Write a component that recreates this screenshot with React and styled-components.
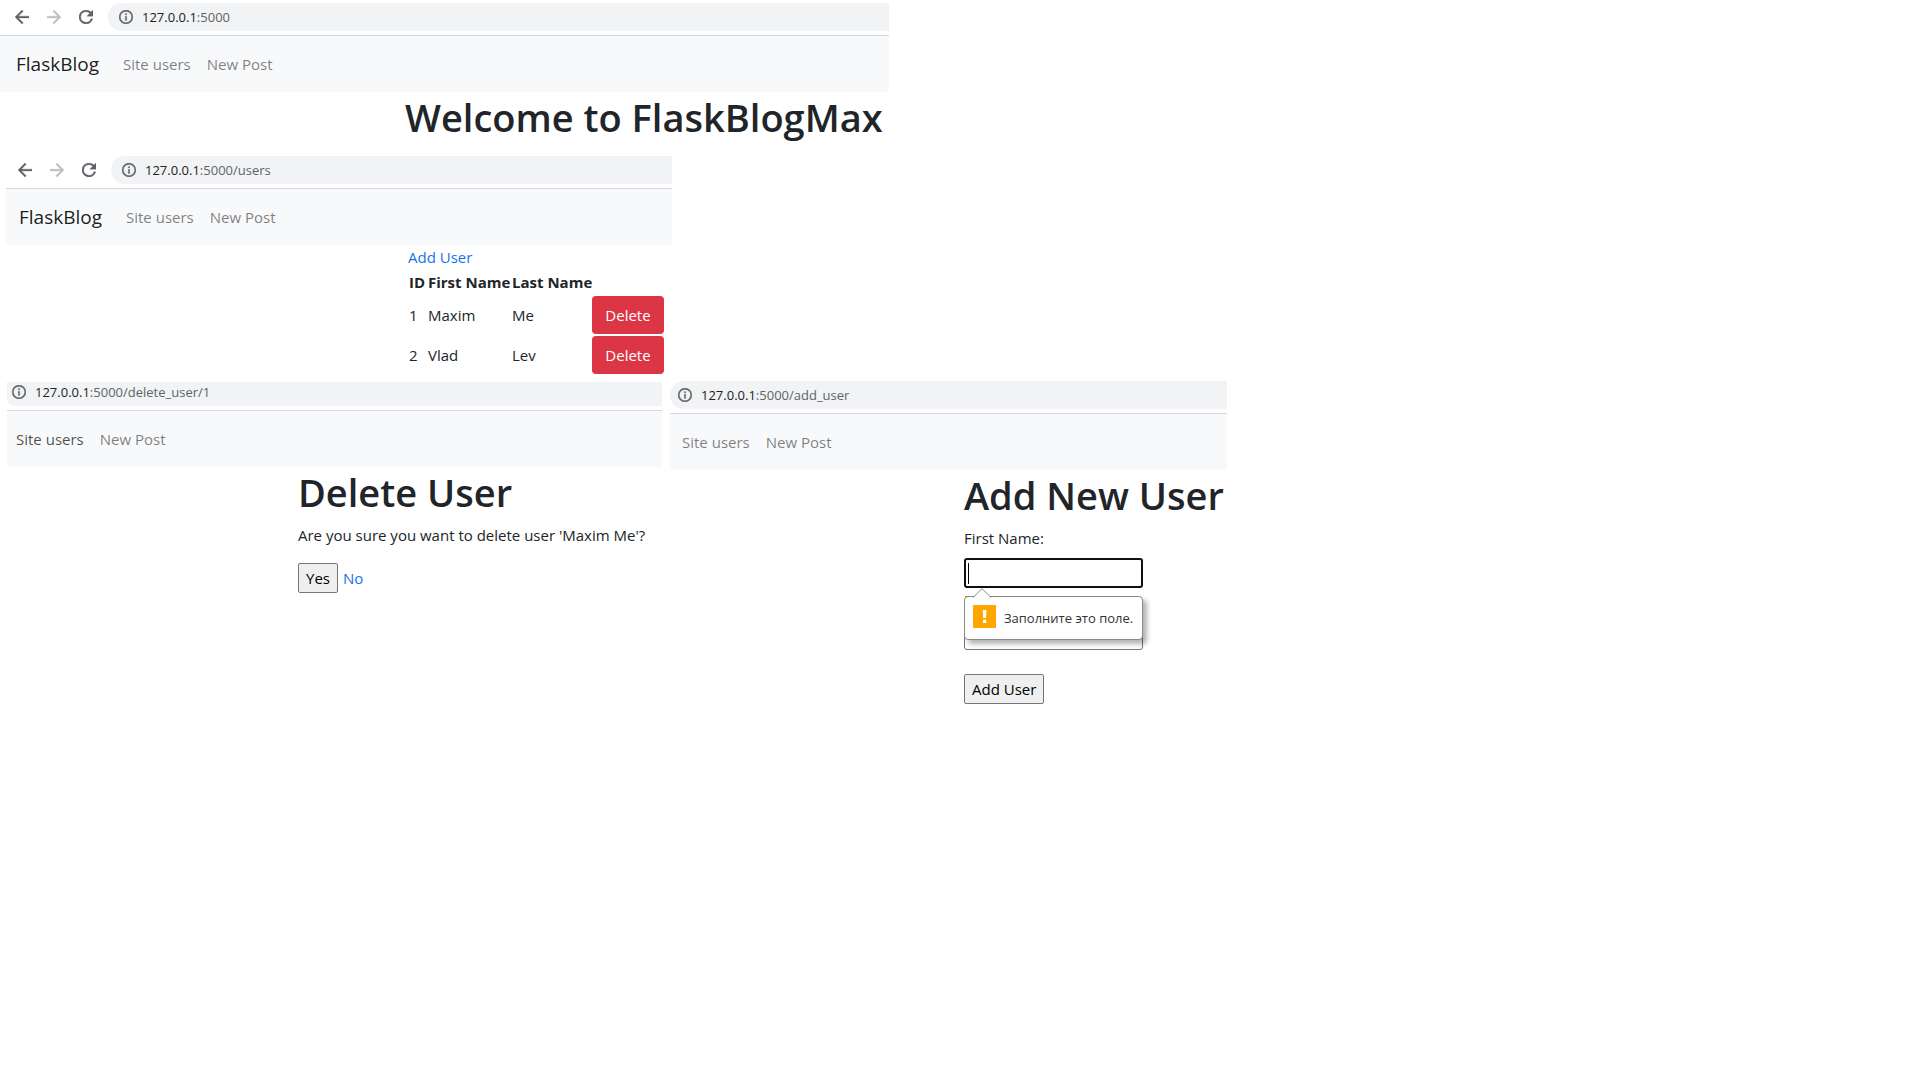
import React from "react";
import styled, { createGlobalStyle } from "styled-components";

const GlobalStyle = createGlobalStyle`
  *, *::before, *::after { box-sizing: border-box; }
  body {
    margin: 0;
    background: #fff;
    color: #212529;
    font-family: "Open Sans", "Noto Sans", sans-serif;
    font-size: 15px;
    line-height: 24px;
  }
`;

const Page = styled.main`
  display: flex;
  flex-direction: column;
  gap: 11px;
`;

const BottomRow = styled.div`
  display: flex;
  align-items: flex-start;
  gap: 8px;
  padding-left: 7px;
  margin-top: -8px;
`;

const Window = styled.section`
  width: 100%;
  max-width: ${(p) => p.$width}px;
  margin-left: ${(p) => p.$left || 0}px;
`;

const Toolbar = styled.div`
  display: flex;
  align-items: center;
  gap: 15px;
  padding: ${(p) => (p.$cut ? "4px 0 4px" : "3px 0 4px")};
  padding-left: ${(p) => p.$inset || 0}px;
  border-bottom: 1px solid #d5d8dc;
`;

const NavButtons = styled.div`
  display: flex;
  gap: 18px;
`;

const IconButton = styled.button`
  display: flex;
  padding: 0;
  border: 0;
  background: none;
  color: #5f6368;
  &:disabled { color: #bcbec1; }
`;

const AddressBar = styled.div`
  flex: 1;
  display: flex;
  align-items: center;
  gap: 9px;
  height: ${(p) => (p.$cut ? 24 : 28)}px;
  padding-left: ${(p) => p.$pad}px;
  padding-bottom: ${(p) => (p.$cut ? 4 : 0)}px;
  border-radius: ${(p) => (p.$cut ? "0 0 0 8px" : "14px 0 0 14px")};
  background: #f1f3f4;
  color: #5f6368;
  font-size: 13px;
  line-height: 20px;
`;

const Host = styled.span`
  color: #202124;
`;

const Navbar = styled.nav`
  display: flex;
  align-items: center;
  gap: 24px;
  height: 56px;
  padding-left: ${(p) => p.$pad}px;
  background: #f8f9fa;
`;

const Brand = styled.a`
  color: rgba(0, 0, 0, 0.9);
  font-size: 19px;
  line-height: 30px;
  text-decoration: none;
`;

const NavLinks = styled.div`
  display: flex;
  gap: 16px;
`;

const NavLink = styled.a`
  color: rgba(0, 0, 0, ${(p) => (p.$active ? 0.7 : 0.5)});
  text-decoration: none;
`;

const Content = styled.div`
  padding-left: ${(p) => p.$indent}px;
`;

const Title = styled.h1`
  margin: 0 0 6px;
  font-size: 38px;
  font-weight: 600;
  line-height: 50px;
  white-space: nowrap;
`;

const WelcomeTitle = styled(Title)`
  margin: 0;
`;

const Link = styled.a`
  color: #1a73e8;
  text-decoration: none;
`;

const Users = styled.table`
  border-collapse: collapse;
  table-layout: fixed;
  width: 257px;
  th, td {
    padding: 1px;
    text-align: left;
    white-space: nowrap;
  }
  th { font-weight: 700; }
`;

const Col = styled.col`
  width: ${(p) => p.$w}px;
`;

const DeleteButton = styled.button`
  display: block;
  width: 100%;
  height: 38px;
  padding: 0;
  border: 0;
  border-radius: 4px;
  background: #dc3545;
  color: #fff;
  font: inherit;
`;

const Paragraph = styled.p`
  margin: 0 0 16px;
`;

const Actions = styled.div`
  display: flex;
  align-items: center;
  gap: 5px;
`;

const PlainButton = styled.button`
  height: 30px;
  padding: 0 7px;
  border: 1px solid #767676;
  border-radius: 2px;
  background: #efefef;
  color: #000;
  font: inherit;
`;

const Form = styled.form`
  display: flex;
  flex-direction: column;
  align-items: flex-start;
`;

const Label = styled.label`
  margin-bottom: 8px;
`;

const Field = styled.div`
  position: relative;
  width: 179px;
`;

const TextInput = styled.input`
  display: block;
  width: 100%;
  height: 30px;
  padding: 1px 4px;
  border: 1px solid #767676;
  border-radius: 3px;
  background: #fff;
  font: inherit;
  outline: none;
  caret-color: transparent;
  &[aria-invalid="true"] { border: 2px solid #101010; }
`;

const Caret = styled.span`
  position: absolute;
  left: 4px;
  top: 5px;
  width: 1px;
  height: 21px;
  background: #000;
`;

const Bubble = styled.div`
  position: absolute;
  top: 38px;
  left: 0;
  z-index: 1;
  display: flex;
  align-items: flex-start;
  gap: 8px;
  width: 100%;
  height: 44px;
  padding: 8px 0 0 8px;
  border: 1px solid #8a8a8a;
  border-radius: 4px;
  background: #fff;
  box-shadow: 4px 4px 5px rgba(0, 0, 0, 0.3);
  color: #333;
  font-size: 13px;
  line-height: 26px;
  white-space: nowrap;
`;

const Pointer = styled.svg`
  position: absolute;
  left: 8px;
  top: -9px;
`;

const SubmitRow = styled.div`
  margin-top: 24px;
`;

const Glyph = ({ box = "4 4 16 16", d }) => (
  <svg width="14" height="14" viewBox={box} fill="currentColor" stroke="currentColor" strokeWidth="0.4" aria-hidden="true">
    <path d={d} />
  </svg>
);

const paths = {
  back: "M20 11H7.83l5.59-5.59L12 4l-8 8 8 8 1.41-1.41L7.83 13H20v-2z",
  forward: "M12 4l-1.41 1.41L16.17 11H4v2h12.17l-5.58 5.59L12 20l8-8z",
  reload:
    "M17.65 6.35A7.96 7.96 0 0 0 12 4a8 8 0 1 0 7.73 10h-2.08A6 6 0 1 1 12 6c1.66 0 3.14.69 4.22 1.78L13 11h7V4l-2.35 2.35z",
  info: "M11 7h2v2h-2zm0 4h2v6h-2zm1-9a10 10 0 1 0 0 20 10 10 0 0 0 0-20zm0 18a8 8 0 1 1 0-16 8 8 0 0 1 0 16z",
};

function BrowserBar({ path, inset, pad = 11, cut = false }) {
  return (
    <Toolbar $inset={inset} $cut={cut}>
      {inset && (
        <NavButtons>
          <IconButton type="button" aria-label="Back"><Glyph d={paths.back} /></IconButton>
          <IconButton type="button" aria-label="Forward" disabled><Glyph d={paths.forward} /></IconButton>
          <IconButton type="button" aria-label="Reload"><Glyph d={paths.reload} /></IconButton>
        </NavButtons>
      )}
      <AddressBar $pad={pad} $cut={cut}>
        <Glyph box="2 2 20 20" d={paths.info} />
        <span><Host>127.0.0.1</Host>{path}</span>
      </AddressBar>
    </Toolbar>
  );
}

function SiteNav({ pad, brand = false, active = false }) {
  return (
    <Navbar $pad={pad}>
      {brand && <Brand href="#home">FlaskBlog</Brand>}
      <NavLinks>
        <NavLink href="#users" $active={active}>Site users</NavLink>
        <NavLink href="#post">New Post</NavLink>
      </NavLinks>
    </Navbar>
  );
}

const users = [
  { id: 1, first: "Maxim", last: "Me" },
  { id: 2, first: "Vlad", last: "Lev" },
];

export default function App() {
  return (
    <>
      <GlobalStyle />
      <Page>
        <Window $width={889}>
          <BrowserBar path=":5000" inset={15} />
          <SiteNav pad={16} brand />
          <Content $indent={405}>
            <WelcomeTitle>Welcome to FlaskBlogMax</WelcomeTitle>
          </Content>
        </Window>

        <Window $width={666} $left={6}>
          <BrowserBar path=":5000/users" inset={12} />
          <SiteNav pad={13} brand />
          <Content $indent={402}>
            <Link href="#add">Add User</Link>
            <Users>
              <colgroup>
                <Col $w={19} />
                <Col $w={84} />
                <Col $w={80} />
                <Col $w={74} />
              </colgroup>
              <thead>
                <tr>
                  <th>ID</th>
                  <th>First Name</th>
                  <th>Last Name</th>
                  <th />
                </tr>
              </thead>
              <tbody>
                {users.map((u) => (
                  <tr key={u.id}>
                    <td>{u.id}</td>
                    <td>{u.first}</td>
                    <td>{u.last}</td>
                    <td><DeleteButton type="button">Delete</DeleteButton></td>
                  </tr>
                ))}
              </tbody>
            </Users>
          </Content>
        </Window>

        <BottomRow>
          <Window $width={655}>
            <BrowserBar path=":5000/delete_user/1" pad={5} cut />
            <SiteNav pad={9} active />
            <Content $indent={291}>
              <Title>Delete User</Title>
              <Paragraph>Are you sure you want to delete user 'Maxim Me'?</Paragraph>
              <Actions>
                <PlainButton type="button">Yes</PlainButton>
                <Link href="#users">No</Link>
              </Actions>
            </Content>
          </Window>

          <Window $width={557}>
            <BrowserBar path=":5000/add_user" pad={8} />
            <SiteNav pad={12} />
            <Content $indent={294}>
              <Title>Add New User</Title>
              <Form>
                <Label htmlFor="first-name">First Name:</Label>
                <Field>
                  <TextInput id="first-name" type="text" aria-invalid="true" />
                  <Caret />
                  <Bubble role="alert">
                    <Pointer width="18" height="10" viewBox="0 0 18 10">
                      <path d="M0 9.5 9 .7l9 8.8" fill="#fff" stroke="#8a8a8a" />
                    </Pointer>
                    <svg width="23" height="23" viewBox="0 0 23 23" aria-hidden="true">
                      <rect width="23" height="23" rx="1" fill="#ffa500" />
                      <path d="M9.7 5h3.8l-.5 8h-2.8zM9.9 14.8h3.4V18H9.9z" fill="#fff" />
                    </svg>
                    <span>Заполните это поле.</span>
                  </Bubble>
                </Field>
                <Label htmlFor="last-name">Last Name:</Label>
                <Field>
                  <TextInput id="last-name" type="text" />
                </Field>
                <SubmitRow>
                  <PlainButton type="button">Add User</PlainButton>
                </SubmitRow>
              </Form>
            </Content>
          </Window>
        </BottomRow>
      </Page>
    </>
  );
}
